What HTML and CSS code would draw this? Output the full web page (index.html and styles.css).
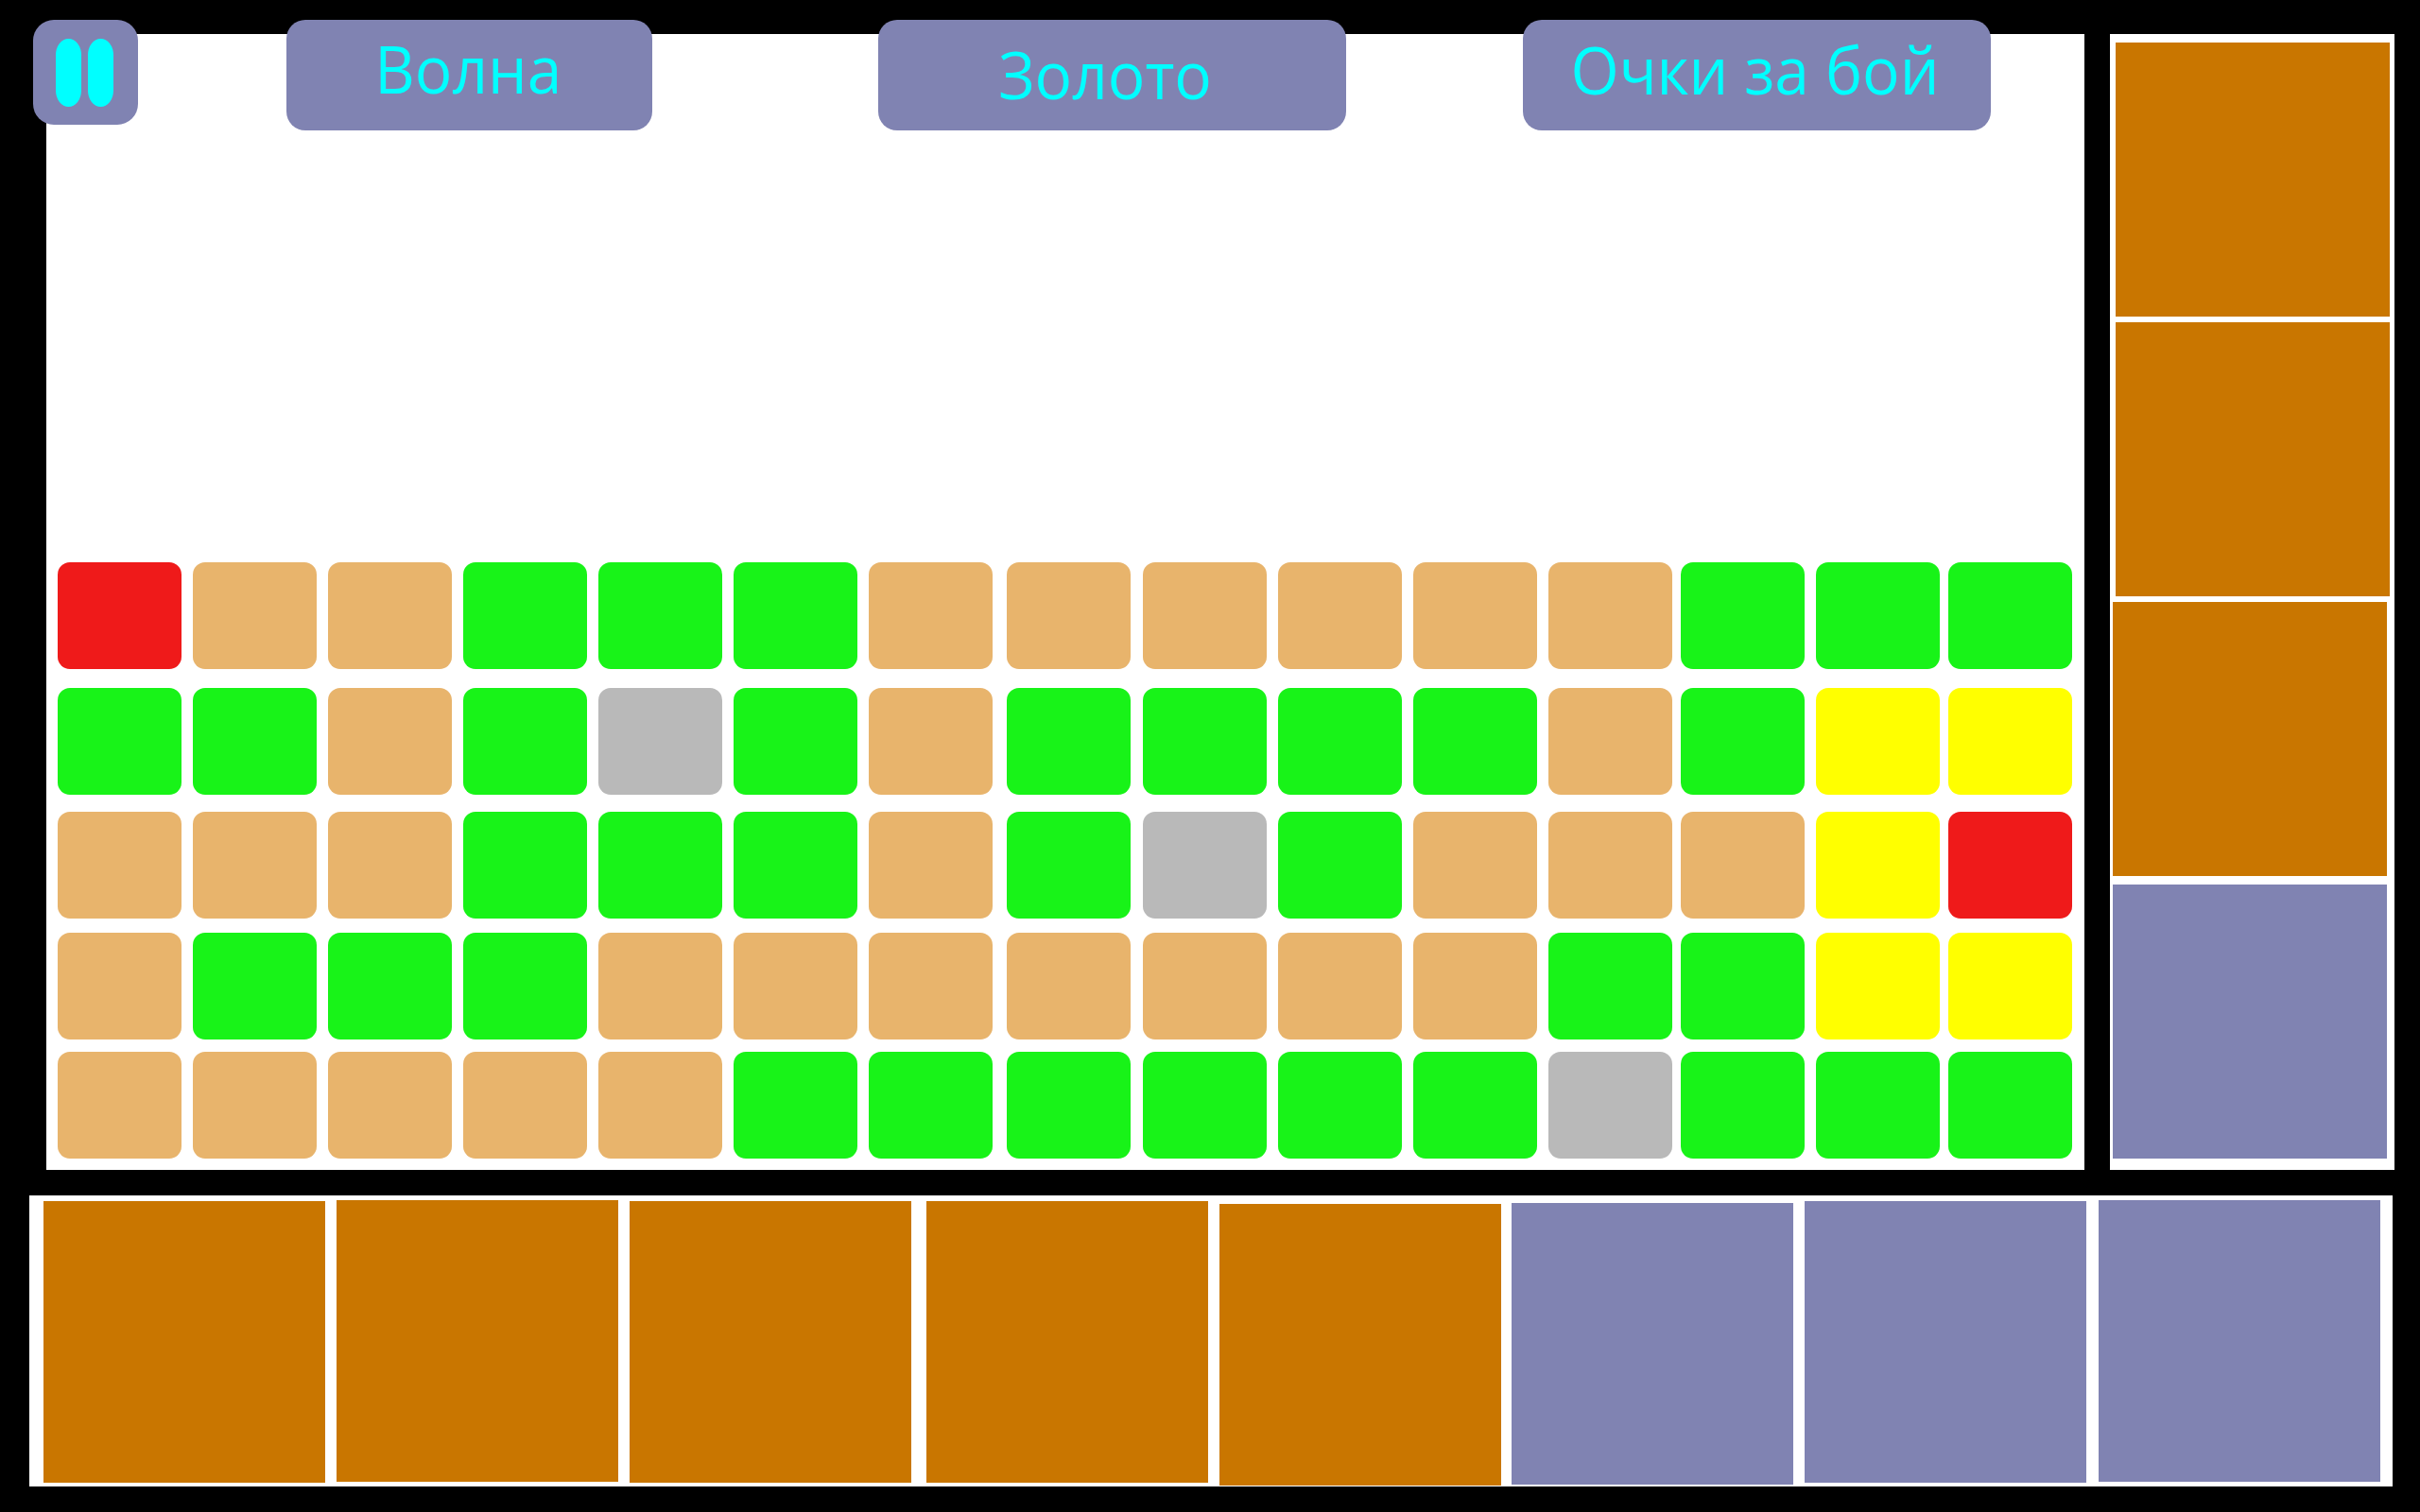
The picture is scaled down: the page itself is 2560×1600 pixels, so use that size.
FILE: index.html
```html
<!DOCTYPE html>
<html lang="ru">
<head>
  <meta charset="UTF-8">
  <title>Волна</title>
  <link rel="stylesheet" href="styles.css">
</head>
<body>
  <div class="top">
    <main class="field">
      <div class="hud pause"><span class="bar"></span><span class="bar"></span></div>
      <div class="hud label wave"><span>Волна</span></div>
      <div class="hud label gold"><span>Золото</span></div>
      <div class="hud label score"><span>Очки за бой</span></div>

      <div class="tiles">
        <div class="tile r"></div><div class="tile t"></div><div class="tile t"></div><div class="tile g"></div><div class="tile g"></div><div class="tile g"></div><div class="tile t"></div><div class="tile t"></div><div class="tile t"></div><div class="tile t"></div><div class="tile t"></div><div class="tile t"></div><div class="tile g"></div><div class="tile g"></div><div class="tile g"></div>
        <div class="tile g"></div><div class="tile g"></div><div class="tile t"></div><div class="tile g"></div><div class="tile s"></div><div class="tile g"></div><div class="tile t"></div><div class="tile g"></div><div class="tile g"></div><div class="tile g"></div><div class="tile g"></div><div class="tile t"></div><div class="tile g"></div><div class="tile y"></div><div class="tile y"></div>
        <div class="tile t"></div><div class="tile t"></div><div class="tile t"></div><div class="tile g"></div><div class="tile g"></div><div class="tile g"></div><div class="tile t"></div><div class="tile g"></div><div class="tile s"></div><div class="tile g"></div><div class="tile t"></div><div class="tile t"></div><div class="tile t"></div><div class="tile y"></div><div class="tile r"></div>
        <div class="tile t"></div><div class="tile g"></div><div class="tile g"></div><div class="tile g"></div><div class="tile t"></div><div class="tile t"></div><div class="tile t"></div><div class="tile t"></div><div class="tile t"></div><div class="tile t"></div><div class="tile t"></div><div class="tile g"></div><div class="tile g"></div><div class="tile y"></div><div class="tile y"></div>
        <div class="tile t"></div><div class="tile t"></div><div class="tile t"></div><div class="tile t"></div><div class="tile t"></div><div class="tile g"></div><div class="tile g"></div><div class="tile g"></div><div class="tile g"></div><div class="tile g"></div><div class="tile g"></div><div class="tile s"></div><div class="tile g"></div><div class="tile g"></div><div class="tile g"></div>
      </div>
    </main>

    <aside class="side">
      <div class="slot brown"></div>
      <div class="slot brown"></div>
      <div class="slot brown shift"></div>
      <div class="slot slate shift"></div>
    </aside>
  </div>

  <div class="shop">
    <div class="slot brown"></div>
    <div class="slot brown"></div>
    <div class="slot brown"></div>
    <div class="slot brown"></div>
    <div class="slot brown"></div>
    <div class="slot slate"></div>
    <div class="slot slate"></div>
    <div class="slot slate"></div>
  </div>
</body>
</html>
```

FILE: styles.css
```css
:root {
  --slate: #8083b2; --brown: #c97600;
  --cyan: #00ffff;
}
html, body {margin:0; height:1600px; overflow:hidden;}
body {background:#000; font-family:"Open Sans",sans-serif;}

.top {display:flex; gap:27px; padding:36px 0 0 49px;}

/* playing field */
.field {
  position:relative; box-sizing:border-box;
  width:2156px; height:1202px; background:#fff;
  padding:559px 0 0 12px;
}
.hud {position:absolute; top:-15px; background:var(--slate); box-sizing:border-box;}
.pause {
  left:-14px; width:111px; height:111px;
  border-radius:22px; display:flex; gap:7px;
  padding:20px 24px;
}
.bar {width:27px; height:72px; background:var(--cyan); border-radius:14px / 18px;}
.label {
  height:117px; border-radius:20px;
  display:flex; justify-content:center;
  color:var(--cyan); font-size:70px; line-height:102px;
}
/* the captions are a bit narrower than the font */
.label span {display:block; transform:scaleX(.94);}
.wave {left:254px; width:387px; padding-right:3px;}
.gold {left:880px; width:495px; line-height:114px; padding-right:15px;}
.score {left:1562px; width:495px; line-height:104px; padding-right:4px;}

.tiles {
  display:grid;
  grid-template-columns:repeat(6,143px) 146px 144px 143px 143px 143px 140px 143px 140px 131px;
  grid-template-rows:133px 131px 128px 126px 113px;
}
.tile {width:131px; height:113px; border-radius:13px;}
.r {background:#ef1a1a;}
.t {background:#e8b46c;}
.g {background:#18f318;}
.s {background:#b9b9b9;}
.y {background:#ffff00;}

/* item slots */
.slot {width:290px; height:290px; flex:none;}
.brown {background:var(--brown);}
.slate {background:var(--slate);}

.side {
  box-sizing:border-box; width:301px; height:1202px;
  background:#fff; padding:9px 0 0 6px;
  display:flex; flex-direction:column; gap:6px;
}
.side .shift {margin-left:-3px;}
.side .slate {margin-top:3px;}

.shop {
  box-sizing:border-box; width:2500px; height:308px;
  margin:27px 0 0 31px; padding-left:15px;
  background:#fff; display:flex;
}
.shop .slot {width:298px; height:298px; margin-top:6px; margin-right:12px;}
.shop .slot:nth-child(2), .shop .slot:nth-child(8) {margin-top:5px;}
.shop .slot:nth-child(3) {margin-right:16px;}
.shop .slot:nth-child(5) {margin-top:9px; margin-right:11px;}
.shop .slot:nth-child(6) {margin-top:8px;}
.shop .slot:nth-child(7) {margin-right:13px;}
```
